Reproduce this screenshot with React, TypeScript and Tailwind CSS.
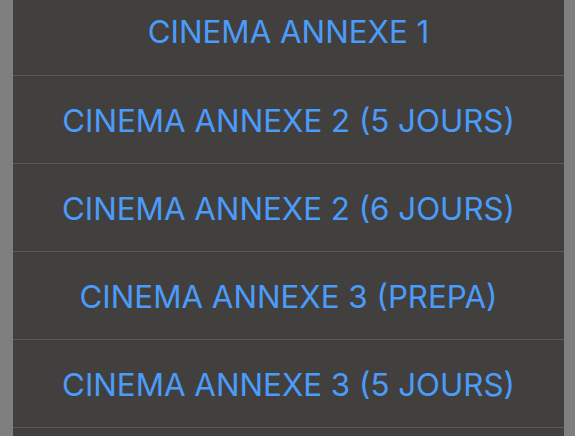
const items = [
  'CINEMA ANNEXE 1',
  'CINEMA ANNEXE 2 (5 JOURS)',
  'CINEMA ANNEXE 2 (6 JOURS)',
  'CINEMA ANNEXE 3 (PREPA)',
  'CINEMA ANNEXE 3 (5 JOURS)',
  '',
];

export default function App() {
  return (
    <div className="h-[436px] w-[575px] overflow-hidden bg-[#7f7f7f] px-[13px]">
      <div className="-mt-[13px] w-[551px] rounded-[14px] bg-[#42403e]">
        {items.map((item, i) => (
          <div
            key={i}
            className={
              'flex h-[88px] items-center justify-center pt-[3px] text-[31.3px] text-[#4b9cfa] ' +
              (i > 0 ? 'border-t border-[#5b5957]' : '')
            }
            style={{ fontFamily: 'Inter, "Liberation Sans", sans-serif' }}
          >
            {item}
          </div>
        ))}
      </div>
    </div>
  );
}
